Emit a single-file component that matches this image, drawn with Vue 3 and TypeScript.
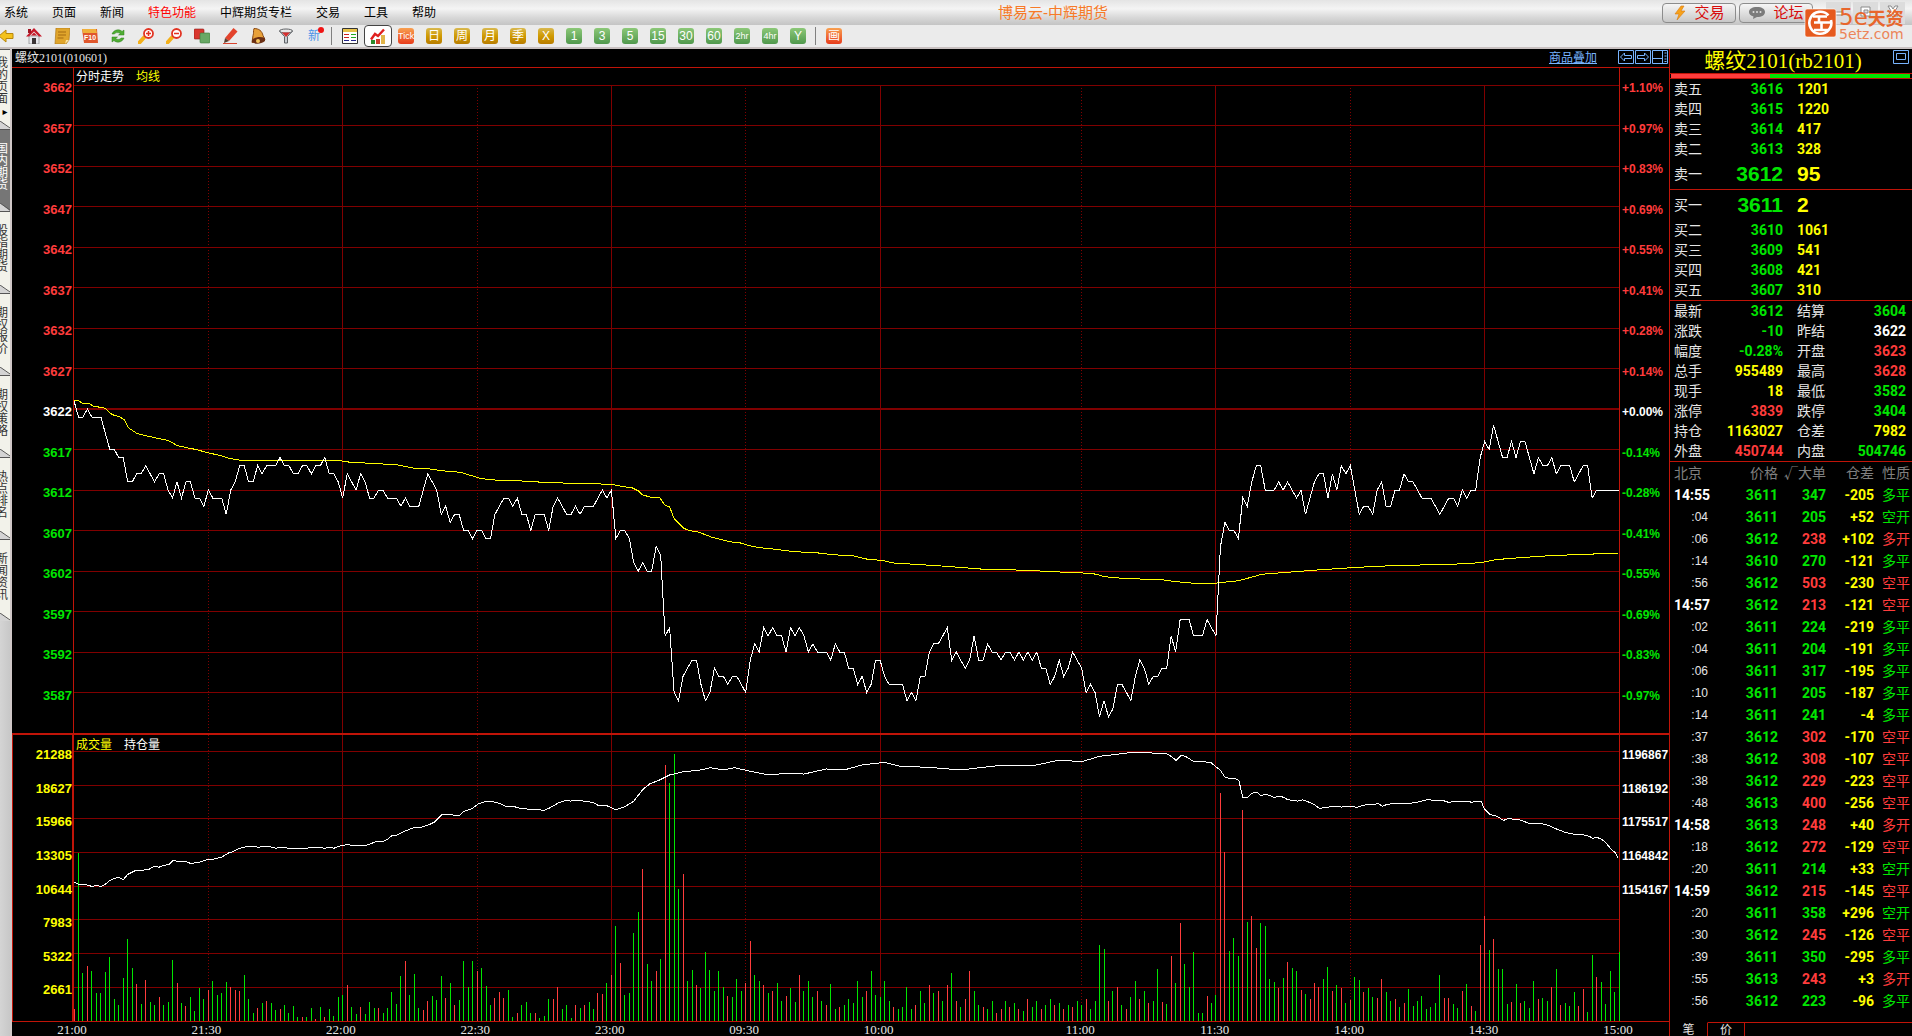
<script setup lang="ts">
interface Stat { name: string; value: string; tone: string }
interface Tick { time: string; price: string; lots: string; diff: string; kind: string; up: boolean }

const menus = ['系统', '页面', '新闻', '特色功能', '中辉期货专栏', '交易', '工具', '帮助']
const periods = [
  { label: 'Tick', tone: 'hot' }, { label: '日', tone: 'gold' }, { label: '周', tone: 'gold' },
  { label: '月', tone: 'gold' }, { label: '季', tone: 'gold' }, { label: 'X', tone: 'gold' },
  { label: '1', tone: 'leaf' }, { label: '3', tone: 'leaf' }, { label: '5', tone: 'leaf' },
  { label: '15', tone: 'leaf' }, { label: '30', tone: 'leaf' }, { label: '60', tone: 'leaf' },
  { label: '2hr', tone: 'leaf' }, { label: '4hr', tone: 'leaf' }, { label: 'Y', tone: 'leaf' },
]
const sideTabs = ['我的页面', '国内期货', '股指期货', '期权报价', '期权策略', '热点排名', '新闻资讯']

/* price axis */
const TOP = 3662
const REF = 3622
const MINUTES = 345
const levels = Array.from({ length: 16 }, (_, i) => TOP - i * 5)
const percents = ['+1.10%', '+0.97%', '+0.83%', '+0.69%', '+0.55%', '+0.41%', '+0.28%', '+0.14%', '+0.00%',
  '-0.14%', '-0.28%', '-0.41%', '-0.55%', '-0.69%', '-0.83%', '-0.97%']
const levelTone = (i: number) => (i < 8 ? 'red' : i === 8 ? 'white' : 'green')

const times = [
  { at: 0, label: '21:00', dotted: false }, { at: 30, label: '21:30', dotted: true },
  { at: 60, label: '22:00', dotted: false }, { at: 90, label: '22:30', dotted: true },
  { at: 120, label: '23:00', dotted: false }, { at: 150, label: '09:30', dotted: true },
  { at: 180, label: '10:00', dotted: false }, { at: 225, label: '11:00', dotted: true },
  { at: 255, label: '11:30', dotted: false }, { at: 285, label: '14:00', dotted: true },
  { at: 315, label: '14:30', dotted: false }, { at: 345, label: '15:00', dotted: false },
]
const innerTimes = times.slice(1, -1)

/* last price per minute, as an offset from 3600 */
const prices = [
  23, 21, 21, 22, 21, 21, 21, 19, 17, 17, 16, 16, 13, 13, 14, 14, 15, 14, 13, 14, 14, 12, 11, 13, 11, 13, 13, 11, 11, 10,
  12, 11, 11, 11, 9, 12, 13, 15, 15, 13, 13, 15, 14, 15, 15, 15, 16, 15, 15, 14, 14, 15, 15, 14, 15, 15, 16, 14, 14, 13,
  11, 14, 13, 12, 14, 13, 11, 11, 12, 12, 11, 11, 11, 10, 11, 10, 10, 10, 12, 14, 13, 12, 9, 10, 8, 9, 9, 7, 7, 6,
  7, 7, 6, 6, 9, 10, 11, 11, 10, 11, 9, 9, 7, 9, 9, 9, 7, 10, 11, 10, 9, 9, 10, 9, 10, 10, 10, 11, 12, 11,
  12, 6, 7, 7, 6, 3, 2, 3, 2, 2, 5, 4, -6, -5, -13, -14, -11, -10, -9, -9, -12, -14, -13, -10, -11, -11, -12, -11, -11, -12,
  -13, -9, -7, -8, -5, -6, -5, -6, -6, -8, -5, -6, -5, -6, -8, -7, -8, -8, -8, -9, -7, -8, -8, -10, -10, -12, -11, -13, -12, -9,
  -9, -11, -12, -12, -12, -12, -14, -13, -14, -11, -11, -8, -7, -7, -6, -5, -9, -8, -9, -10, -9, -6, -9, -9, -7, -8, -8, -9, -8, -8,
  -9, -8, -9, -8, -9, -8, -10, -10, -12, -11, -9, -11, -10, -8, -9,
  -10, -13, -12, -13, -16, -14, -16, -15, -12, -12, -13, -14, -11, -9, -10, -12, -11, -11, -10, -10, -6, -8, -4, -4, -4, -6, -6, -6, -4, -5,
  -6, 5, 8, 7, 7, 6, 11, 10, 13, 15, 15, 12, 12, 12, 13, 12, 13, 12, 11, 12, 9, 11, 13, 14, 14, 11, 14, 12, 15, 14,
  15, 12, 9, 10, 10, 9, 12, 13, 10, 10, 12, 12, 14, 13, 13, 12, 11, 11, 11, 10, 9, 10, 11, 11, 10, 12, 11, 12, 12, 16,
  18, 17, 20, 18, 16, 16, 18, 16, 18, 18, 16, 14, 16, 15, 15, 16, 14, 15, 15, 15, 13, 14, 15, 15, 11, 12, 12, 12, 12, 12, 12,
]
const priceLine = prices.map((p, i) => `${i},${TOP - 3600 - p}`).join(' ')

/* average price: minute, offset from 3600 */
const average: number[][] = [
  [0, 23], [1, 23], [2, 22.7], [3.3, 22.7], [4.5, 22.3], [6.3, 22.2], [7.2, 22], [8, 21.5], [9, 21.2], [10, 21.1],
  [11.2, 20.7], [12.1, 19.7], [14, 19], [16.1, 18.7], [18.5, 18.4], [21.1, 18.1], [23, 17.5], [25.3, 17.2], [27.3, 17],
  [29.8, 16.6], [32.4, 16.3], [34.6, 15.9], [36.8, 15.7], [41.6, 15.6], [59.5, 15.6], [62, 15.4], [66.3, 15.3],
  [72.3, 15.1], [75.9, 14.7], [79.4, 14.6], [83.4, 14.3], [86.2, 14.2], [87.4, 14], [89.8, 13.6], [91, 13.4],
  [94.6, 13.2], [100.6, 13.1], [106.1, 12.9], [114.5, 12.8], [120, 12.7], [122.7, 12.4], [124.5, 12.3], [126, 11.9],
  [126.9, 11.4], [128.9, 11.1], [130.7, 11.1], [132, 10.1], [133, 9.9], [134, 8.5], [135, 7.9], [136.1, 7.3],
  [137.3, 7], [139.5, 6.8], [142.3, 6.2], [146.6, 5.6], [148.6, 5.5], [150.3, 5.2], [152.7, 4.9], [156.3, 4.7],
  [160.7, 4.4], [166.9, 4.2], [169.5, 4], [173.9, 3.9], [176.6, 3.5], [180.5, 3.3], [182.8, 3], [194.2, 2.6],
  [203.5, 2.2], [212.3, 2.1], [218.9, 1.9], [224.2, 1.8], [228.5, 1.6], [230, 1.3], [234, 1.1], [243.2, 0.9],
  [245.9, 0.7], [249.8, 0.5], [255, 0.5], [256.6, 0.6], [260.1, 0.8], [262.7, 1.2], [265.3, 1.6], [270, 1.8],
  [276.9, 2.1], [285, 2.4], [291.8, 2.6], [304.4, 2.8], [311.5, 2.9], [314.8, 3.1], [317.4, 3.4], [321.9, 3.6],
  [329.7, 3.9], [339.4, 4.1], [344.8, 4.2],
]
const averageLine = average.map(([m, p]) => `${m},${TOP - 3600 - p}`).join(' ')

/* volume per minute in units of 79 lots; negative is a falling minute */
const UNIT = 79
const VOLUME_SPAN = 22583
const volumeLevels = [21288, 18627, 15966, 13305, 10644, 7983, 5322, 2661]
const interestLevels = ['1196867', '1186192', '1175517', '1164842', '1154167', '', '', '']
const volumes = [
  12, -168, -48, 55, -50, -28, -28, -49, -64, -22, -16, -43, -82, -53, 37, -17, 41, -19, -16, 24, -16, -19, -61, 38, -18, 15, -24, -10, -33, -22,
  31, -40, -26, -28, -39, 34, 31, 30, -46, -22, -8, 13, -18, 20, -18, -11, 12, -16, -8, -15, -4, 4, -4, -13, 2, -14, 4, -12, -5, -24,
  -26, 36, -14, -7, 14, -7, -19, -13, 13, -8, -13, -29, -17, -45, 60, -26, -47, -13, 11, 20, -25, -21, -45, 23, -38, 16, -21, -60, -34, -60,
  50, -53, -35, -16, 23, 29, 23, -31, -4, 8, -16, -19, -8, 8, -3, -5, -22, 22, 34, -12, -16, -3, 16, -13, 16, -19, -12, 28, 27, -38,
  46, -95, 58, -26, -28, -88, -109, 152, -57, -40, 50, -62, 256, -238, -267, -132, 147, -40, -51, 36, -33, -69, -51, -30, -50, -34, 25, -24, -42, -30,
  38, 80, -46, -40, 36, -28, 30, -38, -20, 25, -33, -19, 46, -30, -40, -24, 30, -20, 16, -37, -12, 14, -16, -22, -18, -40, -24, 30, -50, -26,
  -24, -40, -20, 14, -12, -14, -34, -12, 16, -30, -18, 36, -28, 30, -20, 36, -48, 20, -14, 22, 50, -30, -16, 14, -12, -20, 8, 12, -20, 14,
  -18, 12, -10, 22, -14, -20, 12, -16, -22, 16, -18, 12, -16, 14, -20,
  -16, 22, -12, -20, -76, -72, 20, -30, 34, -16, 12, -24, -40, 22, -30, 18, -20, -52, 19, -17, 65, -38, 98, -57, -34, -69, -8, -8, 25, -18,
  -26, 228, 169, -70, -83, -65, 211, -99, 105, 73, -98, -95, -42, -39, 33, -43, 59, -53, -50, 31, -27, 22, 38, 34, -42, -54, 30, -36, 33, -18,
  21, -44, -41, 29, -33, -24, 23, 42, -29, -20, 22, -14, 18, -32, -15, -20, -25, -12, -14, -18, -46, 23, 23, -17, -13, 30, -37, 15, -10, 76,
  105, -71, 82, -52, -52, -17, 19, -37, 18, -20, -13, -40, 22, -23, -20, 34, -52, 16, -18, -15, -29, 15, 32, -9, -66, 44, -39, -17, -50, -29, -69,
]
const bars = volumes.map((v, i) => ({ at: i, top: VOLUME_SPAN - Math.abs(v) * UNIT, up: v > 0 }))

/* open interest: minute, thousands of lots */
const interest: number[][] = [
  [0, 1155.4], [1, 1154.8], [2.5, 1154.7], [4, 1154.1], [5, 1154.4], [6, 1154.1], [7, 1154.8], [8, 1156], [9, 1156.6],
  [10, 1157], [11, 1156.2], [12, 1157.9], [13.7, 1159.1], [15, 1159.2], [16.7, 1159.5], [18, 1160.5], [19, 1160.2],
  [20, 1160.7], [21.3, 1161.1], [22.2, 1162.4], [23, 1162.1], [25, 1162], [26, 1161.4], [28, 1161.7], [29, 1162.3],
  [30, 1162.7], [31.5, 1162.8], [33, 1163.4], [34.5, 1164.7], [35.5, 1165.1], [37, 1166.2], [39, 1166.8], [40.3, 1166.8],
  [41.2, 1166.5], [42.1, 1166.8], [43.3, 1166.8], [45.1, 1166.2], [46, 1166.5], [48.1, 1166.2], [52, 1166.2],
  [53.1, 1166.5], [54.2, 1166.5], [56, 1166.2], [57, 1166.5], [58.1, 1166.2], [59, 1166.8], [61.1, 1167.4], [62, 1167.1],
  [65.3, 1167.1], [67.5, 1168.3], [69.1, 1168.4], [70, 1169], [71, 1170.2], [72.1, 1170.3], [73.8, 1171.6],
  [75.9, 1172.7], [77.5, 1172.8], [79.2, 1173.6], [80.4, 1174.4], [82.1, 1176.8], [84.1, 1176.8], [86, 1176.5],
  [87.1, 1177.9], [89, 1178.8], [90.1, 1180.1], [92.1, 1181.1], [93.7, 1180.9], [95.2, 1180.3], [96.3, 1179.5],
  [98.2, 1179.4], [100.1, 1178.7], [102.9, 1178.5], [105, 1178.2], [106, 1178.8], [108.1, 1180.5], [109.8, 1181.4],
  [110.9, 1181.1], [111.9, 1181.4], [114, 1181.1], [115.9, 1180.7], [117, 1179.8], [118.9, 1179.7], [121, 1178.4],
  [122.9, 1179.3], [125, 1181.1], [127, 1184.8], [128.6, 1186.6], [130.9, 1187.9], [133, 1189.4], [136, 1190.4],
  [140, 1191], [142, 1191.7], [145, 1191], [147.5, 1191.7], [150, 1190.9], [155, 1189.4], [159, 1189.9], [163, 1189.7],
  [168, 1191.3], [172, 1191], [176, 1192.6], [181, 1193.4], [185, 1192], [190, 1191.9], [198, 1191], [206, 1192.3],
  [214, 1192.3], [220, 1194.1], [225, 1193.6], [229, 1195.3], [236, 1196.5], [242.6, 1196.3], [243.8, 1196.2],
  [245, 1195.3], [246.1, 1194], [247.3, 1195.7], [248.2, 1195.3], [250, 1193.7], [252.5, 1193.6], [254, 1193.2],
  [255, 1192], [256, 1190.9], [257, 1188.7], [258, 1188.3], [259.2, 1188.3], [260.1, 1187.7], [261, 1182.3],
  [262.1, 1182.3], [263, 1183.6], [264.1, 1184], [265, 1182.9], [266.2, 1183.3], [268, 1182.3], [269.1, 1182.7],
  [270.2, 1182.3], [271.1, 1181.5], [272.4, 1181.4], [273.2, 1181.1], [274.3, 1181.5], [275.2, 1181.1], [276.9, 1180.1],
  [278.1, 1178.8], [279.9, 1179.2], [282, 1179.5], [283, 1179.2], [284, 1179.5], [286.5, 1179.2], [288.8, 1180.1],
  [290.4, 1180.1], [291.2, 1180.4], [292.2, 1179.5], [293.2, 1180.1], [295.1, 1180.4], [298.3, 1180.4], [300.3, 1180.9],
  [302, 1181.5], [305.5, 1181.4], [307, 1180.7], [308.5, 1181.1], [311.3, 1181.1], [312.1, 1180.7], [313.2, 1181.1],
  [314.2, 1181.1], [315, 1178.5], [316.2, 1176.9], [317.8, 1176.3], [319.2, 1175], [320, 1175.5], [322.4, 1175.4],
  [324.9, 1174.1], [327.5, 1174.1], [329.3, 1173.4], [331.2, 1172.2], [333, 1171.2], [335, 1170.6], [336.8, 1170.5],
  [338.3, 1170], [339.2, 1169.3], [340, 1169.7], [341.1, 1169], [342, 1168.1], [343.2, 1165.9], [344.1, 1164.9],
  [344.8, 1163.2],
]
const interestLine = interest
  .map(([m, k]) => `${m},${(VOLUME_SPAN - 21288 + (1196.867 - k) / 10.675 * 2661).toFixed(0)}`)
  .join(' ')

const asks = [['卖五', '3616', '1201'], ['卖四', '3615', '1220'], ['卖三', '3614', '417'], ['卖二', '3613', '328'], ['卖一', '3612', '95']]
const bids = [['买一', '3611', '2'], ['买二', '3610', '1061'], ['买三', '3609', '541'], ['买四', '3608', '421'], ['买五', '3607', '310']]
const s = (name: string, value: string, tone: string): Stat => ({ name, value, tone })
const stats: Stat[][] = [
  [s('最新', '3612', 'green'), s('结算', '3604', 'green')],
  [s('涨跌', '-10', 'green'), s('昨结', '3622', 'white')],
  [s('幅度', '-0.28%', 'green'), s('开盘', '3623', 'red')],
  [s('总手', '955489', 'yellow'), s('最高', '3628', 'red')],
  [s('现手', '18', 'yellow'), s('最低', '3582', 'green')],
  [s('涨停', '3839', 'red'), s('跌停', '3404', 'green')],
  [s('持仓', '1163027', 'yellow'), s('仓差', '7982', 'yellow')],
  [s('外盘', '450744', 'red'), s('内盘', '504746', 'green')],
]
const ticks: Tick[] = `14:55 3611 347 -205 多平 d
:04 3611 205 +52 空开 d
:06 3612 238 +102 多开 u
:14 3610 270 -121 多平 d
:56 3612 503 -230 空平 u
14:57 3612 213 -121 空平 u
:02 3611 224 -219 多平 d
:04 3611 204 -191 多平 d
:06 3611 317 -195 多平 d
:10 3611 205 -187 多平 d
:14 3611 241 -4 多平 d
:37 3612 302 -170 空平 u
:38 3612 308 -107 空平 u
:38 3612 229 -223 空平 u
:48 3613 400 -256 空平 u
14:58 3613 248 +40 多开 u
:18 3612 272 -129 空平 u
:20 3611 214 +33 空开 d
14:59 3612 215 -145 空平 u
:20 3611 358 +296 空开 d
:30 3612 245 -126 空平 u
:39 3611 350 -295 多平 d
:55 3613 243 +3 多开 u
:56 3612 223 -96 多平 d`.split('\n').map((row) => {
  const [time, price, lots, diff, kind, dir] = row.split(' ')
  return { time, price, lots, diff, kind, up: dir === 'u' }
})
</script>

<template>
  <div class="app">
    <header class="menubar">
      <nav class="menus">
        <button v-for="m in menus" :key="m" type="button" :class="{ special: m === '特色功能' }">{{ m }}</button>
      </nav>
      <h1 class="app-title">博易云-中辉期货</h1>
      <div class="window-tools">
        <button type="button" class="pill">
          <svg width="14" height="16" viewBox="0 0 14 16"><path d="M8 1 2 9h4l-2 6 8-9H8l3-5z" fill="#f7a21b" stroke="#d97a10" stroke-width=".6" /></svg>交易
        </button>
        <button type="button" class="pill">
          <svg width="18" height="14" viewBox="0 0 18 14"><path d="M9 1c5 0 8 2 8 5s-3 5-8 5l-4 2 .5-2.500C2.500 9.800 1 8.300 1 6c0-3 3-5 8-5z" fill="#7b7b7b" /><g fill="#ddd"><circle cx="5.500" cy="6" r="1" /><circle cx="9" cy="6" r="1" /><circle cx="12.500" cy="6" r="1" /></g></svg>论坛
        </button>
        <div class="window-buttons">
          <button type="button" aria-label="最小化"><svg width="14" height="14" viewBox="0 0 14 14"><path d="M3 8h8v3H3z" /></svg></button>
          <button type="button" aria-label="还原"><svg width="14" height="14" viewBox="0 0 14 14"><path d="M2 3h9v9H2zM5 6h4v3H5z" /></svg></button>
          <button type="button" aria-label="关闭"><svg width="14" height="14" viewBox="0 0 14 14"><path d="M2 2h3l2 3 2-3h3L9 7l3 5H9L7 9l-2 3H2l3-5z" /></svg></button>
        </div>
      </div>
      <div class="watermark">
        <svg width="33" height="30" viewBox="0 0 33 30">
          <rect x="1" y="1" width="31" height="28" rx="2" fill="#e65a1e" stroke="#fff" stroke-opacity=".6" />
          <g fill="none" stroke="#fff" stroke-width="2.600"><path d="M24.500 7.400A11 11 0 1 0 27 12" /><path d="M9 8.500h14M15 8.500v6M10 14.500h17M17.500 14.500V22M10 22h14" /></g>
        </svg>
        <div class="watermark-text"><strong><span>5e</span>天资</strong><small>5etz.com</small></div>
      </div>
    </header>

    <div class="toolbar">
      <button type="button" aria-label="后退"><svg viewBox="0 0 16 16"><path d="M1 8 8 2v3.500h7v5H8V14z" fill="#f4c21c" stroke="#b8860b" /></svg></button>
      <button type="button" aria-label="主页"><svg viewBox="0 0 16 16"><path d="M3 8h10v8H3z" fill="#e8e8ee" stroke="#777" stroke-width=".6" /><path d="M0 8.500 8 0l8 8.500h-3L8 3.500l-5 5z" fill="#c61a2b" /><path d="M2 1h3v4H2z" fill="#a01522" /><path d="M5 7.500 8 4.500l3 3z" fill="#c61a2b" /><path d="M6 10h4v6H6z" fill="#3b3436" /></svg></button>
      <button type="button" aria-label="便签"><svg viewBox="0 0 16 16"><path d="M2 0h14l-1 12-3 4H1z" fill="#e0a52c" stroke="#b07a18" stroke-width=".7" /><path d="M4 4h8M4 7h8M3.500 10h6" stroke="#a56b10" /><path d="m11 16 1-4h3z" fill="#fbe4a0" /></svg></button>
      <button type="button" aria-label="F10"><svg viewBox="0 0 16 16"><path d="M0 1h15l1 14H2z" fill="#e0562c" /><path d="M0 1h14l1 4H1z" fill="#f0b03c" /><text x="8" y="12" class="tiny">F10</text></svg></button>
      <button type="button" aria-label="刷新"><svg viewBox="0 0 16 16"><path d="M2 6c2-5 8-5 10-2.500l2-1.500v5H8.500l2-1.500C8 4 5 4.500 4.500 6zM14 10c-2 5-8 5-10 2.500L2 14V9h5.500l-2 1.500c2 1.500 5 1 5.500-.5z" fill="#4fae33" stroke="#2c7d1a" stroke-width=".5" /></svg></button>
      <button type="button" aria-label="放大"><svg viewBox="0 0 16 16"><path d="m1.500 14.500 4.500-5" stroke="#f4b01a" stroke-width="4" stroke-linecap="round" /><circle cx="10.500" cy="5.500" r="4.500" fill="#fff" stroke="#e23322" stroke-width="1.800" /><path d="M8 5.500h5M10.500 3v5" stroke="#e23322" stroke-width="1.500" /></svg></button>
      <button type="button" aria-label="缩小"><svg viewBox="0 0 16 16"><path d="m1.500 14.500 4.500-5" stroke="#f4b01a" stroke-width="4" stroke-linecap="round" /><circle cx="10.500" cy="5.500" r="4.500" fill="#fff" stroke="#e23322" stroke-width="1.800" /><path d="M8 5.500h5" stroke="#e23322" stroke-width="1.500" /></svg></button>
      <button type="button" aria-label="叠放"><svg viewBox="0 0 16 16"><rect x="0" y="1" width="10" height="10" rx="1" fill="#d9372f" stroke="#8e1d18" stroke-width=".6" /><rect x="6" y="5" width="10" height="10" rx="1" fill="#69a865" stroke="#3d7a3b" stroke-width=".6" /></svg></button>
      <button type="button" aria-label="画笔"><svg viewBox="0 0 16 16"><path d="M3 10 11.500 0l4 3.500L7 13z" fill="#e3432c" /><path d="m3 10 4 3-5 2z" fill="#5a4030" /><path d="M1 15.500h14" stroke="#d9442f" /></svg></button>
      <button type="button" aria-label="预警"><svg viewBox="0 0 16 16"><path d="M4 .5c5 0 8 2.500 9 7l2 4-13 3 1-7C4 5 3 3.500 4 .5z" fill="#e8a13a" stroke="#8a4a14" /><path d="M2 12c3-3 8-4 13-2v3c-4 3-9 4-13 1z" fill="#6b2f14" /><circle cx="8" cy="13" r="2" fill="#f8c860" /></svg></button>
      <button type="button" aria-label="筛选"><svg viewBox="0 0 16 16"><path d="M1.500 3h13L9.500 8.500V15h-3V8.500z" fill="#c9cdd2" stroke="#5f6266" /><ellipse cx="8" cy="3" rx="6.500" ry="2" fill="#e8e8e8" stroke="#5f6266" /><path d="M4 4.500h8L8 9z" fill="#d62f2f" /></svg></button>
      <button type="button" class="news" aria-label="新"><span>新</span><i></i></button>
      <span class="divider"></span>
      <button type="button" aria-label="报价"><svg viewBox="0 0 16 16"><path d="M.5.500h15v15H.5z" fill="#fff" stroke="#333" /><path d="M1 1h14v3H1z" fill="#e7c24a" /><path d="M2 6.500h5M2 9.500h5" stroke="#c22" /><path d="M9 6.500h5M9 9.500h5" stroke="#2a2" /><path d="M2 12.500h5M9 12.500h5" stroke="#228" /></svg></button>
      <button type="button" class="active" aria-label="分时"><svg viewBox="0 0 16 16"><path d="M1 11.500 5 6l3 2 6-6.500" fill="none" stroke="#e02020" stroke-width="2.400" /><path d="M1 12h4v4H1z" fill="#2c8a2c" /><path d="M6 11h4v5H6z" fill="#d03c2c" /><path d="M11 7h4v9h-4z" fill="#e2b54a" /></svg></button>
      <button v-for="p in periods" :key="p.label" type="button"><span class="chip" :class="[p.tone, { narrow: p.label.length > 2 }]">{{ p.label }}</span></button>
      <span class="divider"></span>
      <button type="button"><span class="chip draw">画</span></button>
    </div>

    <main class="workspace">
      <nav class="side-tabs">
        <button v-for="(t, i) in sideTabs" :key="t" type="button" :class="{ current: i === 1 }">
          <span>{{ t }}</span><em v-if="i === 0">▸</em>
          <svg width="10" height="8" viewBox="0 0 10 8"><path d="M0 0v8h10z" fill="#d4d4d4" /><path d="m0 0 10 7" stroke="#555" /></svg>
        </button>
      </nav>

      <section class="chart">
        <div class="chart-head">
          <span>螺纹2101(010601)</span>
          <div class="chart-tools">
            <a href="#">商品叠加</a>
            <button type="button" aria-label="左移"><svg viewBox="0 0 16 14"><path d="M.5.500h15v13H.5zM2.500 7l4-4v2.500h7v3h-7V11z" /></svg></button>
            <button type="button" aria-label="右移"><svg viewBox="0 0 16 14"><path d="M.5.500h15v13H.5zM13.500 7l-4-4v2.500h-7v3h7V11z" /></svg></button>
            <button type="button" aria-label="布局"><svg viewBox="0 0 16 14"><path d="M.5.500h15v13H.5zM.5 8.500h10M10.500 1v12M12.500 3h2M12.500 6h2M12.500 9h2M12.500 11.500h2" /></svg></button>
          </div>
        </div>

        <div class="panel price-panel">
          <ul class="axis left"><li v-for="(p, i) in levels" :key="p" :class="levelTone(i)">{{ p }}</li></ul>
          <div class="plot">
            <div class="legend"><span>分时走势</span><span class="yellow">均线</span></div>
            <svg class="canvas" viewBox="0 0 345 80" preserveAspectRatio="none">
              <line v-for="p in levels" :key="p" x1="0" :x2="MINUTES" :y1="TOP - p" :y2="TOP - p" class="grid" :class="{ base: p === REF }" />
              <line v-for="t in innerTimes" :key="t.label" :x1="t.at" :x2="t.at" y1="0" y2="80" class="grid" :class="{ dotted: t.dotted }" />
              <polyline :points="averageLine" class="trace average" />
              <polyline :points="priceLine" class="trace" />
            </svg>
          </div>
          <ul class="axis right"><li v-for="(p, i) in percents" :key="p" :class="levelTone(i)">{{ p }}</li></ul>
        </div>

        <div class="panel volume-panel">
          <ul class="axis left"><li v-for="v in volumeLevels" :key="v" class="yellow">{{ v }}</li></ul>
          <div class="plot">
            <div class="legend over"><span class="yellow">成交量</span><span>持仓量</span></div>
            <svg class="canvas" :viewBox="`0 0 ${MINUTES} ${VOLUME_SPAN}`" preserveAspectRatio="none">
              <line v-for="v in volumeLevels" :key="v" x1="0" :x2="MINUTES" :y1="VOLUME_SPAN - v" :y2="VOLUME_SPAN - v" class="grid" />
              <line v-for="t in innerTimes" :key="t.label" :x1="t.at" :x2="t.at" y1="0" :y2="VOLUME_SPAN" class="grid" :class="{ dotted: t.dotted }" />
              <line v-for="b in bars" :key="b.at" :x1="b.at" :x2="b.at" :y1="b.top" :y2="VOLUME_SPAN" class="bar" :class="{ up: b.up }" />
              <polyline :points="interestLine" class="trace" />
            </svg>
          </div>
          <ul class="axis right"><li v-for="(v, i) in interestLevels" :key="i" class="white">{{ v }}</li></ul>
        </div>

        <svg class="time-axis">
          <text v-for="t in times" :key="t.label" :x="`${t.at / MINUTES * 100}%`" y="12">{{ t.label }}</text>
        </svg>
      </section>

      <aside class="quote">
        <div class="quote-title">
          <h2>螺纹2101(rb2101)</h2>
          <button type="button" aria-label="展开"><svg width="16" height="14" viewBox="0 0 16 14"><path d="M.5.500h15v13H.5zM3.500 3.500h9v6h-9z" /></svg></button>
        </div>
        <div class="ratio"><i></i><b></b></div>
        <table class="book">
          <tbody>
            <tr v-for="r in asks" :key="r[0]" :class="{ best: r[0] === '卖一' }"><th scope="row">{{ r[0] }}</th><td class="green">{{ r[1] }}</td><td class="yellow">{{ r[2] }}</td></tr>
          </tbody>
        </table>
        <table class="book">
          <tbody>
            <tr v-for="r in bids" :key="r[0]" :class="{ best: r[0] === '买一' }"><th scope="row">{{ r[0] }}</th><td class="green">{{ r[1] }}</td><td class="yellow">{{ r[2] }}</td></tr>
          </tbody>
        </table>
        <table class="stats">
          <tbody>
            <tr v-for="(pair, i) in stats" :key="i">
              <template v-for="c in pair" :key="c.name"><th scope="row">{{ c.name }}</th><td :class="c.tone">{{ c.value }}</td></template>
            </tr>
          </tbody>
        </table>
        <table class="ticks">
          <thead><tr><th>北京</th><th>价格</th><th>√大单</th><th>仓差</th><th>性质</th></tr></thead>
          <tbody>
            <tr v-for="(t, i) in ticks" :key="i">
              <td :class="t.time.length > 3 ? 'minute' : 'second'">{{ t.time }}</td>
              <td class="green">{{ t.price }}</td>
              <td :class="t.up ? 'red' : 'green'">{{ t.lots }}</td>
              <td class="yellow">{{ t.diff }}</td>
              <td class="kind" :class="t.up ? 'red' : 'green'">{{ t.kind }}</td>
            </tr>
          </tbody>
        </table>
        <div class="quote-tabs"><button type="button" class="current">笔</button><button type="button">价</button><span></span></div>
      </aside>
    </main>
  </div>
</template>

<style>
body { margin: 0; background: #000; overflow: hidden; }
</style>

<style scoped>
.app {
  --frame: #c01408;
  --grid: #800000;
  --red: #ff3c3c;
  --green: #00e600;
  --yellow: #ffff00;
  --light: #e6e6e6;
  --blue: #78b4ff;
  display: flex;
  flex-direction: column;
  height: 100vh;
  font: 12px/16px "Liberation Sans", "Noto Sans CJK SC", sans-serif;
  color: #fff;
}
button { margin: 0; padding: 0; border: 0; background: none; font: inherit; color: inherit; }
ul { margin: 0; padding: 0; list-style: none; }
.red { color: var(--red); }
.green { color: var(--green); }
.yellow { color: var(--yellow); }
.white { color: #fff; }

.menubar {
  position: relative;
  flex: none;
  display: flex;
  height: 25px;
  background: linear-gradient(#e4e4e4, #f4f4f4 35%, #d8d8d8 70%, #c4c4c4);
  color: #000;
}
.menus { flex: 994 1 0; display: flex; gap: 24px; padding-left: 4px; align-items: center; }
.menus .special { color: #f00; }
.app-title { flex: none; margin: 0; font: 15px/25px "Liberation Sans", "Noto Sans CJK SC", sans-serif; color: #f77a28; }
.window-tools { flex: 804 1 0; display: flex; justify-content: flex-end; align-items: center; gap: 3px; }
.pill {
  display: flex;
  align-items: center;
  justify-content: center;
  gap: 7px;
  box-sizing: border-box;
  width: 74px;
  height: 20px;
  border: 1px solid #8c8c8c;
  border-radius: 4px;
  background: linear-gradient(#f6f6f6, #c8c8c8);
  font-size: 15px;
  color: #d80c0c;
}
.window-buttons { display: flex; gap: 2px; width: 96px; box-sizing: border-box; padding-left: 10px; }
.window-buttons button { width: 25px; height: 22px; background: #dcdcdc; }
.window-buttons svg { fill: #fff; stroke: #8a8a8a; fill-rule: evenodd; }
.watermark { position: absolute; top: 8px; right: 5px; display: flex; gap: 2px; color: #e8662c; }
.watermark-text { display: flex; flex-direction: column; width: 68px; }
.watermark strong { font-size: 18px; line-height: 18px; white-space: nowrap; }
.watermark strong span { font: 23px/18px "DejaVu Sans", sans-serif; }
.watermark small { font: 14px/12px "DejaVu Sans", sans-serif; color: #ec8458; }

.toolbar {
  flex: none;
  display: flex;
  align-items: center;
  height: 22px;
  background: #ebebeb;
  border-bottom: 2px solid #c8c0c0;
}
.toolbar button { flex: none; display: flex; align-items: center; justify-content: center; box-sizing: border-box; width: 28px; height: 22px; }
.toolbar button:first-child { width: 20px; justify-content: flex-end; padding-right: 6px; }
.toolbar button svg { flex: none; width: 16px; height: 16px; }
.toolbar .active { border: 1px solid #444; border-radius: 4px; background: #fff; }
.tiny { font: bold 7px "Liberation Sans", sans-serif; fill: #fff; text-anchor: middle; }
.divider { flex: none; width: 1px; height: 18px; margin: 0 4px 0 3px; background: #808080; }
.news { position: relative; color: #4c94e8; }
.news i { position: absolute; right: 4px; top: 2px; width: 6px; height: 6px; border-radius: 50%; background: #f01414; }
.chip {
  width: 16px;
  height: 16px;
  border-radius: 3px;
  font: 12px/16px "Liberation Sans", "Noto Sans CJK SC", sans-serif;
  text-align: center;
  color: #fff;
}
.chip.narrow { font-size: 9px; }
.hot, .draw { background: linear-gradient(#f8a050, #e83c1c); }
.gold { background: linear-gradient(#d8b850, #d09a00 50%, #b87c00); }
.leaf { background: linear-gradient(#8cc878, #50984c); }

.workspace { flex: 1; display: flex; min-height: 0; }
.side-tabs {
  flex: none;
  width: 10px;
  overflow: hidden;
  background: linear-gradient(90deg, #d4d4d4, #c8c8c8);
  border-right: 2px solid #d0c8c8;
}
.side-tabs button {
  position: relative;
  display: flex;
  flex-direction: column;
  width: 10px;
  height: 82px;
  box-sizing: border-box;
  padding-top: 13px;
  border-top: 1px solid #555;
  background: #f2f2ea;
  color: #333;
}
.side-tabs button:first-child { height: 80px; padding-top: 7px; }
.side-tabs span { width: 12px; margin-left: -4px; line-height: 12px; word-break: break-all; }
.side-tabs em { width: 10px; height: 10px; font: 10px/14px "DejaVu Sans", sans-serif; color: #000; }
.side-tabs svg { position: absolute; left: 0; bottom: 0; }
.side-tabs .current { background: #767676; color: #fff; }

.chart { flex: 1; display: flex; flex-direction: column; min-width: 0; background: #000; }
.chart-head {
  flex: none;
  display: flex;
  justify-content: space-between;
  height: 18px;
  padding-left: 3px;
  border-bottom: 1px solid var(--frame);
  font: 12px/18px "Liberation Serif", "Noto Sans CJK SC", serif;
  color: var(--light);
}
.chart-tools { display: flex; gap: 1px; padding: 1px 1px 0 0; }
.chart-tools a { margin-right: 20px; line-height: 16px; color: var(--blue); }
.chart-tools button { width: 16px; height: 14px; }
.chart-tools svg, .quote-title svg { display: block; fill: none; stroke: var(--blue); }
.panel { display: flex; min-height: 0; }
.price-panel { flex: 665 1 0; }
.volume-panel { flex: 286 1 0; border: solid var(--frame); border-width: 2px 0 1px 1px; }
.axis { flex: none; display: flex; flex-direction: column; box-sizing: border-box; padding: 12px 0 5px; font-weight: bold; line-height: 16px; }
.axis li { flex: 1 1 0; min-height: 0; }
.axis.left { width: 62px; padding-right: 1px; border-right: 1px solid var(--frame); text-align: right; font-size: 13px; }
.axis.right { width: 50px; padding-left: 2px; border-left: 1px solid var(--frame); font-size: 12px; }
.volume-panel .axis.left { width: 61px; padding-right: 0; border-right-width: 2px; }
.plot { flex: 1; position: relative; display: flex; flex-direction: column; min-width: 0; }
.legend { flex: none; display: flex; gap: 12px; height: 17px; padding-left: 2px; line-height: 19px; }
.legend.over { position: absolute; left: 0; top: 1px; }
.canvas { flex: 1; display: block; width: 100%; height: 0; min-height: 0; overflow: visible; }
.canvas line, .canvas polyline { vector-effect: non-scaling-stroke; shape-rendering: crispEdges; stroke-width: 1px; }
.canvas .grid { stroke: var(--grid); }
.canvas .grid.base { stroke-width: 2px; }
.canvas .grid.dotted { stroke-dasharray: 1 2; }
.canvas .bar { stroke: var(--green); }
.canvas .bar.up { stroke: var(--red); }
.trace { fill: none; stroke: #fff; }
.trace.average { stroke: var(--yellow); }
.time-axis { flex: none; align-self: stretch; width: auto; height: 14px; margin: 0 51px 0 60px; overflow: visible; }
.time-axis text { font: 13px "Liberation Serif", serif; fill: var(--light); text-anchor: middle; }

.quote { flex: none; display: flex; flex-direction: column; box-sizing: border-box; width: 243px; border-left: 1px solid var(--frame); background: #000; }
.quote-title { position: relative; flex: none; height: 24px; border-bottom: 1px solid var(--frame); }
.quote-title h2 { margin: 0; padding-right: 16px; font: 21px/24px "Liberation Serif", "Noto Sans CJK SC", serif; text-align: center; color: var(--yellow); }
.quote-title button { position: absolute; right: 3px; top: 1px; }
.ratio { flex: none; display: flex; height: 4px; padding: 0 2px 0 1px; border-bottom: 1px solid var(--frame); }
.ratio i { flex: 99; background: var(--red); }
.ratio b { flex: 139; background: var(--green); }
table { flex: none; width: 100%; border-collapse: collapse; table-layout: fixed; }
th, td { height: 20px; padding: 0; font: bold 14px/20px Roboto, "Liberation Sans", sans-serif; text-align: right; white-space: nowrap; }
th { padding-left: 4px; font: 14px/18px "Noto Sans CJK SC", sans-serif; text-align: left; color: var(--light); }
.book, .stats { display: block; border-bottom: 1px solid var(--frame); }
.book tr, .stats tr { display: flex; }
.book th, .stats th { flex: none; width: 36px; }
.book td { flex: none; width: 73px; }
.book td:last-child { flex: 1; padding-left: 14px; text-align: left; }
.book .best th { height: 30px; line-height: 29px; }
.book .best td { height: 30px; font: bold 21px/29px "Liberation Sans", sans-serif; }
.stats td { flex: none; width: 73px; }
.stats th:nth-of-type(2) { padding-left: 14px; }
.stats td:last-child { flex: 1; padding-right: 8px; }
.ticks th, .ticks td { height: 22px; line-height: 22px; vertical-align: top; }
.ticks th { padding: 0; line-height: 20px; color: #808080; text-align: right; }
.ticks th:nth-child(1) { width: 36px; padding: 0 0 0 4px; text-align: left; }
.ticks th:nth-child(2) { width: 68px; }
.ticks th:nth-child(3), .ticks th:nth-child(4) { width: 48px; }
.ticks th:nth-child(5) { padding-left: 8px; text-align: left; }
.ticks .minute { color: #fff; }
.ticks .second { padding-right: 2px; font: 12px/22px "Liberation Sans", sans-serif; color: var(--light); }
.ticks .kind { padding-left: 8px; text-align: left; font: 14px/20px "Noto Sans CJK SC", sans-serif; }
.quote-tabs { flex: none; display: flex; height: 14px; margin-top: auto; color: var(--light); }
.quote-tabs button { width: 36px; height: 14px; box-sizing: border-box; line-height: 15px; overflow: hidden; border-top: 1px solid var(--frame); }
.quote-tabs .current { width: 38px; border-top-color: #000; border-right: 1px solid var(--frame); }
.quote-tabs span { flex: 1; border: solid var(--frame); border-width: 1px 0 0 1px; }
</style>
